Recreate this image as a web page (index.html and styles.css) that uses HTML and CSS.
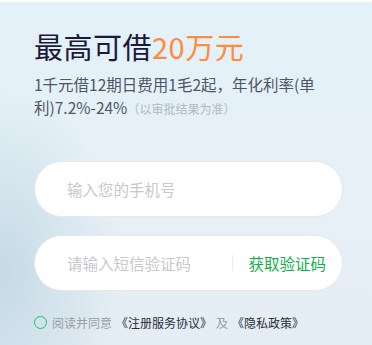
FILE: index.html
```html
<!DOCTYPE html>
<html>
<head>
    <title>借款</title>
    <link rel="stylesheet" href="styles.css">
</head>
<body>
    <div class="page">
        <h1 class="title">最高可借<span class="amount">20万元</span></h1>
        <p class="desc">1千元借12期日费用1毛2起，年化利率(单利)7.2%-24%<span class="note">（以审批结果为准）</span></p>

        <div class="form">
            <div class="field">
                <input type="tel" placeholder="输入您的手机号">
            </div>
            <div class="field">
                <input type="text" placeholder="请输入短信验证码">
                <span class="sep"></span>
                <a class="code-btn">获取验证码</a>
            </div>
        </div>

        <div class="agree">
            <span class="check"></span>
            <span>阅读并同意</span>
            <a>《注册服务协议》</a>
            <span>及</span>
            <a>《隐私政策》</a>
        </div>
    </div>
</body>
</html>
```

FILE: styles.css
```css
html, body { margin: 0; padding: 0; }
body {
    font-family: "Noto Sans CJK SC", "Noto Sans", sans-serif;
    background: #fff;
    width: 372px; height: 345px; overflow: hidden;
}
.page {
    margin-top: 2px;
    height: 343px;
    box-sizing: border-box;
    padding: 24px 28px 0 34px;
    background:
        radial-gradient(ellipse 120px 180px at 0px 270px, rgba(170,200,215,0.55), rgba(170,200,215,0) 100%),
        linear-gradient(180deg, #e3f1f8 0%, #e6f0f6 60%, #e4edf4 100%);
}
.title { margin: 0; font-size: 29px; font-weight: 400; color: #1b1a3a; line-height: 40px; letter-spacing: 0.5px; }
.amount { color: #ff8b3d; }
.desc { margin: 7px 0 0; font-size: 15.5px; line-height: 23px; color: #4f5566; }
.note { font-size: 12px; line-height: 16px; color: #b2b8c2; }
.form { margin-top: 42px; display: flex; flex-direction: column; gap: 18px; width: 309px; }
.field {
    height: 56px; box-sizing: border-box;
    background: #fff; border: 1px solid #e6e8ec; border-radius: 28px;
    display: flex; align-items: center; padding: 0 16px 0 32px;
}
.field input {
    flex: 1; min-width: 0; border: none; outline: none; background: transparent;
    font-family: inherit; font-size: 15.5px; color: #333; padding: 0;
}
.field input::placeholder { color: #c8c8cc; }
.sep { width: 1px; height: 16px; background: #ececec; margin-right: 15px; }
.code-btn { font-size: 15.5px; color: #0db04b; }
.agree {
    margin-top: 23px; display: flex; align-items: center;
    font-size: 12px; color: #999ca6; gap: 4px;
}
.agree a { color: #2a2d3a; }
.check { width: 11px; height: 11px; border: 1.5px solid #23c068; border-radius: 50%; margin-right: 1px; }
```
